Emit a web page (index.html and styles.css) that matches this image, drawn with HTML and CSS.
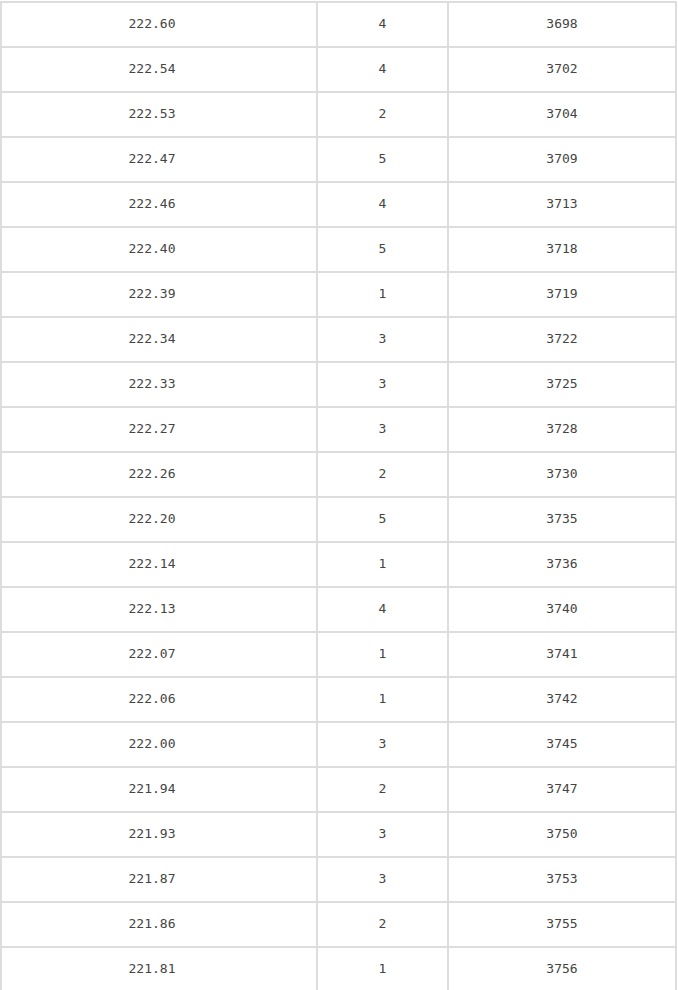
FILE: index.html
```html
<!DOCTYPE html>
<html lang="zh">
<head>
<meta charset="utf-8">
<link rel="stylesheet" href="styles.css">
</head>
<body>
<table class="score-table">
  <colgroup><col class="c1"><col class="c2"><col class="c3"></colgroup>
  <tbody>
    <tr><td class="score">222.60</td><td>4</td><td>3698</td></tr>
    <tr><td class="score">222.54</td><td>4</td><td>3702</td></tr>
    <tr><td class="score">222.53</td><td>2</td><td>3704</td></tr>
    <tr><td class="score">222.47</td><td>5</td><td>3709</td></tr>
    <tr><td class="score">222.46</td><td>4</td><td>3713</td></tr>
    <tr><td class="score">222.40</td><td>5</td><td>3718</td></tr>
    <tr><td class="score">222.39</td><td>1</td><td>3719</td></tr>
    <tr><td class="score">222.34</td><td>3</td><td>3722</td></tr>
    <tr><td class="score">222.33</td><td>3</td><td>3725</td></tr>
    <tr><td class="score">222.27</td><td>3</td><td>3728</td></tr>
    <tr><td class="score">222.26</td><td>2</td><td>3730</td></tr>
    <tr><td class="score">222.20</td><td>5</td><td>3735</td></tr>
    <tr><td class="score">222.14</td><td>1</td><td>3736</td></tr>
    <tr><td class="score">222.13</td><td>4</td><td>3740</td></tr>
    <tr><td class="score">222.07</td><td>1</td><td>3741</td></tr>
    <tr><td class="score">222.06</td><td>1</td><td>3742</td></tr>
    <tr><td class="score">222.00</td><td>3</td><td>3745</td></tr>
    <tr><td class="score">221.94</td><td>2</td><td>3747</td></tr>
    <tr><td class="score">221.93</td><td>3</td><td>3750</td></tr>
    <tr><td class="score">221.87</td><td>3</td><td>3753</td></tr>
    <tr><td class="score">221.86</td><td>2</td><td>3755</td></tr>
    <tr><td class="score">221.81</td><td>1</td><td>3756</td></tr>
  </tbody>
</table>
</body>
</html>
```
FILE: styles.css
```css
html, body {
  margin: 0;
  padding: 0;
  background: #fff;
}
body {
  padding-top: 1px;
  font-family: "DejaVu Sans Mono", "Liberation Mono", "Noto Sans CJK SC", monospace;
  font-size: 13px;
  color: #444;
}
.score-table {
  width: 677px;
  table-layout: fixed;
  border-collapse: separate;
  border-spacing: 2px;
  background: #ddd;
}
.c1 { width: 314px; }
.c2 { width: 129px; }
.c3 { width: 226px; }
.score-table td {
  background: #fff;
  height: 41px;
  padding: 0 0 2px;
  text-align: center;
  vertical-align: middle;
}
.score-table td.score {
  padding-right: 14px;
}
```
